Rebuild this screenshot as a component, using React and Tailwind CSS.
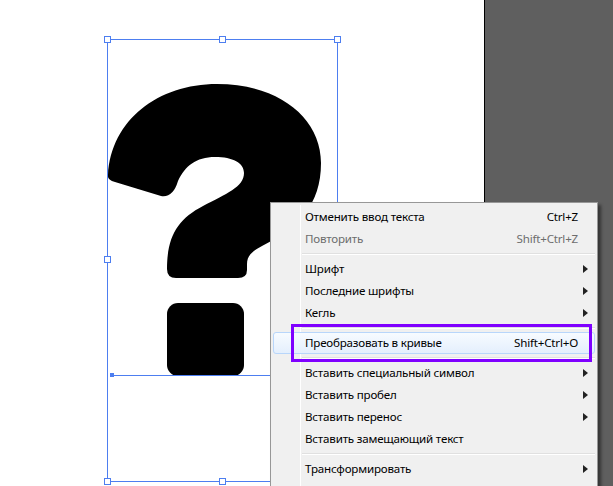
const items = [
  { label: "Отменить ввод текста", shortcut: "Ctrl+Z" },
  { label: "Повторить", shortcut: "Shift+Ctrl+Z", disabled: true },
  { sep: true },
  { label: "Шрифт", sub: true },
  { label: "Последние шрифты", sub: true },
  { label: "Кегль", sub: true },
  { sep: true },
  { label: "Преобразовать в кривые", shortcut: "Shift+Ctrl+O", active: true },
  { sep: true },
  { label: "Вставить специальный символ", sub: true },
  { label: "Вставить пробел", sub: true },
  { label: "Вставить перенос", sub: true },
  { label: "Вставить замещающий текст" },
  { sep: true },
  { label: "Трансформировать", sub: true },
]

const handles = [
  [107, 39],
  [222, 39],
  [337, 39],
  [107, 259],
  [107, 481],
  [222, 481],
]

const Artboard = () => (
  <svg className="absolute left-0 top-0" width="484" height="486" viewBox="0 0 484 486">
    <path
      fill="#000"
      d="M108 175 C111 120 158 84 217 84 C279 84 321 118 321 163 C321 205 298 228 262 246 C252 251 247 256 247 264 L247 270 Q247 278 238 278 L176 278 Q167 278 167 269 C167 236 178 219 203 206 C226 194 244 187 244 173 C244 163 233 157 215 157 C196 157 185 166 178 181 Q173 198 161 196 L115 182 Q107 180 108 175 Z"
    />
    <rect x="167" y="303" width="77" height="73" rx="11" fill="#000" />
    <g stroke="#4d7ef0" strokeWidth="1" fill="none" shapeRendering="crispEdges">
      <rect x="107.5" y="39.5" width="230" height="442" />
      <line x1="112" y1="375.5" x2="337" y2="375.5" />
    </g>
    <rect x="110" y="373" width="4" height="4" fill="#4d7ef0" />
    {handles.map(([x, y]) => (
      <rect
        key={`${x}-${y}`}
        x={x - 2.5}
        y={y - 2.5}
        width="6"
        height="6"
        fill="#fff"
        stroke="#4d7ef0"
        strokeWidth="1"
        shapeRendering="crispEdges"
      />
    ))}
  </svg>
)

const Arrow = () => (
  <svg width="5" height="8" viewBox="0 0 5 8">
    <path d="M0 0 L5 4 L0 8 Z" fill="#222" />
  </svg>
)

const ContextMenu = () => (
  <div className="absolute left-[270px] top-[202px] w-[328px] h-[300px] bg-[#f0f0f0] border border-[#979797] shadow-[3px_3px_3px_rgba(0,0,0,0.45)] pt-[3px]">
    <div className="absolute left-[29px] top-[2px] bottom-0 w-px bg-[#e2e3e3] border-r border-white" />
    {items.map((item, i) =>
      item.sep ? (
        <div key={i} className="h-[8px] pt-[3px] pl-[31px] pr-[2px] relative">
          <div className="h-[2px] border-t border-[#e0e0e0] border-b border-b-white" />
        </div>
      ) : (
        <div
          key={i}
          className={`relative h-[22px] mx-[2px] flex items-center rounded-[3px] border ${
            item.active
              ? "border-[#b8d6fb] bg-gradient-to-b from-[#f7fbff] to-[#e4effd]"
              : "border-transparent"
          }`}
        >
          <span className={`flex-1 pl-[31px] ${item.disabled ? "text-[#6d6d6d]" : "text-black"}`}>
            {item.label}
          </span>
          {item.shortcut && (
            <span className={item.disabled ? "text-[#6d6d6d]" : "text-black"}>{item.shortcut}</span>
          )}
          <span className="w-[16px] flex justify-start pl-[5px]">{item.sub && <Arrow />}</span>
        </div>
      )
    )}
  </div>
)

export default function App() {
  return (
    <div
      className="relative w-[613px] h-[486px] overflow-hidden flex bg-white text-[11.6px] tracking-[-0.2px] leading-none"
      style={{ fontFamily: '"Noto Sans", "Open Sans", sans-serif' }}
    >
      <div className="w-[484px] h-full bg-white" />
      <div className="flex-1 h-full bg-[#5f5f5f] border-l border-black" />
      <Artboard />
      <ContextMenu />
      <div className="absolute left-[291px] top-[324px] w-[301px] h-[38px] border-[3px] border-[#7f00ff]" />
    </div>
  )
}
